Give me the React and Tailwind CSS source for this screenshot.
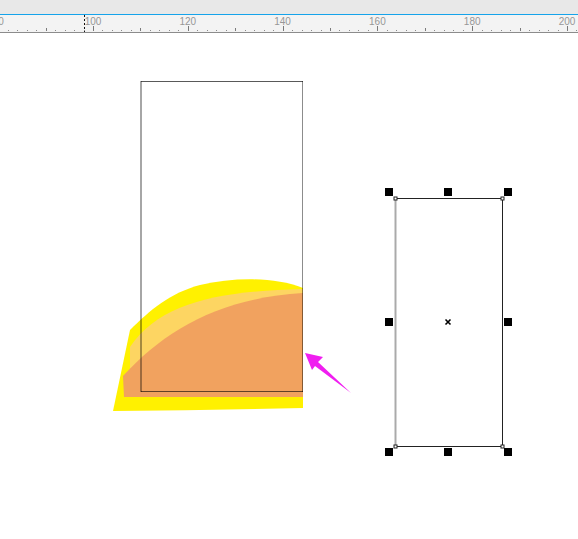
import React from 'react'

const X0 = 93
const PX = 4.74

const unitX = (u) => X0 + (u - 100) * PX

const RulerTicks = () => {
  const ticks = []
  for (let u = 80; u <= 206; u += 2) {
    const x = Math.round(unitX(u)) + 0.5
    if (u % 20 === 0) ticks.push(<line key={u} x1={x} x2={x} y1={26} y2={31} stroke="#7a7a7a" />)
    else if (u % 10 === 0) ticks.push(<line key={u} x1={x} x2={x} y1={28} y2={31} stroke="#7a7a7a" />)
    else ticks.push(<rect key={u} x={x - 0.5} y={30} width={1} height={1} fill="#8a8a8a" />)
  }
  return ticks
}

const labels = [80, 100, 120, 140, 160, 180, 200]

const Ruler = () => (
  <div className="relative h-[18px] bg-[#f3f3f3] border-b border-[#8c8c8c]">
    <svg width="578" height="17" viewBox="0 15 578 17" className="block">
      <RulerTicks />
      {labels.map((u) => (
        <text
          key={u}
          x={unitX(u)}
          y={25}
          textAnchor="middle"
          fontSize="10"
          fill="#979797"
          fontFamily="'Liberation Sans', Arial, sans-serif"
        >
          {u}
        </text>
      ))}
      <line x1={84.5} x2={84.5} y1={15} y2={32} stroke="#111" strokeDasharray="2 2" />
    </svg>
  </div>
)

const Handle = ({ x, y }) => <rect x={x - 4} y={y - 4} width={8} height={8} fill="#000" />

const Node = ({ x, y }) => <rect x={x - 1.5} y={y - 1.5} width={3} height={3} fill="#fff" stroke="#222" strokeWidth="1" />

const Canvas = () => (
  <svg width="578" height="506" viewBox="0 33 578 506" className="block">
    {/* yellow blob */}
    <path
      d="M113,411 L130,330 C150,310 170,293 200,285 C235,277 275,277 303,288 L303,408 Q210,410 113,411 Z"
      fill="#fff100"
    />
    {/* light band */}
    <path d="M130,375 L130,347 C160,302 220,291 303,289 L303,330 Z" fill="#fdd562" />
    {/* orange */}
    <path d="M123,376 C165,330 220,298 303,293 L303,397 L124,397 Z" fill="#f1a25f" />

    {/* left frame */}
    <line x1={141} x2={141} y1={81} y2={392} stroke="#000" strokeOpacity="0.35" strokeWidth="2" />
    <line x1={141} x2={303} y1={81.5} y2={81.5} stroke="#000" strokeOpacity="0.65" />
    <line x1={302.5} x2={302.5} y1={81} y2={392} stroke="#000" strokeOpacity="0.45" />
    <line x1={141} x2={303} y1={391.5} y2={391.5} stroke="#000" strokeOpacity="0.6" />

    {/* arrow */}
    <path d="M305,353 L323,357 L318,362 L351,393 L315,366 L312,370 Z" fill="#f01ef0" />

    {/* selected rect */}
    <line x1={395.5} x2={395.5} y1={198} y2={446} stroke="#aaa" strokeWidth="2" />
    <line x1={395} x2={502} y1={198.5} y2={198.5} stroke="#222" />
    <line x1={502.5} x2={502.5} y1={198} y2={446} stroke="#222" />
    <line x1={395} x2={502} y1={446.5} y2={446.5} stroke="#222" />
    <Node x={395.5} y={198.5} />
    <Node x={502.5} y={198.5} />
    <Node x={395.5} y={446.5} />
    <Node x={502.5} y={446.5} />

    <Handle x={389} y={192} />
    <Handle x={448} y={192} />
    <Handle x={508} y={192} />
    <Handle x={389} y={322} />
    <Handle x={508} y={322} />
    <Handle x={389} y={452} />
    <Handle x={448} y={452} />
    <Handle x={508} y={452} />

    {/* center mark */}
    <path d="M445.5,319.5 L450.5,324.5 M450.5,319.5 L445.5,324.5" stroke="#000" strokeWidth="1.6" />
  </svg>
)

export default function App() {
  return (
    <div className="w-[578px] h-[539px] bg-white overflow-hidden flex flex-col">
      <div className="h-[14px] bg-[#e8e8e8]" />
      <div className="h-px bg-[#15a3ea]" />
      <Ruler />
      <Canvas />
    </div>
  )
}
